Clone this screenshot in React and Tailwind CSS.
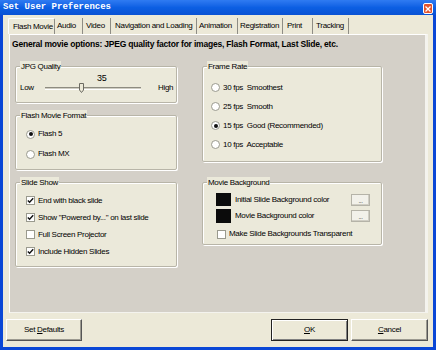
const F = "font-['Liberation_Sans',Arial,sans-serif]";
const T = "text-[8px] tracking-[-0.3px]";

function Group({ label, className, children }) {
  return (
    <div className={"relative border border-[#b8b5a8] rounded-[2px] bg-[#ebe9da] shadow-[inset_1px_1px_0_#ffffff,1px_1px_0_#ffffff] " + className}>
      <span className="absolute left-[4px] top-[-6px] px-[1px] bg-[#ebe9da] text-[8px] tracking-[-0.3px] leading-[11px] whitespace-nowrap">{label}</span>
      {children}
    </div>
  );
}

function Radio({ checked }) {
  return (
    <span className="w-[9px] h-[9px] rounded-full border border-[#9a9a8e] bg-white flex items-center justify-center shrink-0">
      {checked && <span className="w-[4px] h-[4px] rounded-full bg-[#111]" />}
    </span>
  );
}

function Check({ checked }) {
  return (
    <span className="w-[9px] h-[9px] border border-[#9a9a8e] bg-white flex items-center justify-center shrink-0">
      {checked && (
        <svg width="7" height="7" viewBox="0 0 7 7">
          <path d="M0.8 3.4 L2.6 5.2 L6.2 1.2" stroke="#111" strokeWidth="1.4" fill="none" />
        </svg>
      )}
    </span>
  );
}

function Tab({ w, pl, children, selected }) {
  return (
    <div
      className={
        "h-[16px] flex items-center text-[8px] tracking-[-0.3px] leading-none whitespace-nowrap " +
        (selected
          ? "bg-[#ece9d8] border-l border-t border-white border-r border-r-[#8e8d85] rounded-t-[2px]"
          : "border-r border-[#8e8d85]")
      }
      style={{ width: w, paddingLeft: pl }}
    >
      {children}
    </div>
  );
}

function Btn({ children, def, className }) {
  return (
    <div
      className={
        "h-[22px] flex items-center justify-center text-[8px] tracking-[-0.3px] bg-[#ece9d8] " +
        (def
          ? "border border-[#222] shadow-[inset_1px_1px_0_#fff,inset_-1px_-1px_0_#808080]"
          : "border-t border-l border-white border-r border-b border-r-[#555] border-b-[#555] shadow-[inset_-1px_-1px_0_#9c9a90]") +
        " " + className
      }
    >
      <span className="whitespace-pre">{children}</span>
    </div>
  );
}

function Row({ h, children }) {
  return <div className={"flex items-center gap-[3px] whitespace-pre " + h}>{children}</div>;
}

export default function App() {
  return (
    <div className={"w-[436px] h-[350px] bg-[#0a47d6] flex flex-col text-black overflow-hidden " + F}>
      {/* title bar */}
      <div className="h-[15px] flex items-center justify-between pl-[3px] pr-[3px] bg-gradient-to-b from-[#2f7bf2] via-[#0c5fe3] to-[#0a52d4]">
        <span className="font-['Liberation_Mono',monospace] font-bold text-[9px] text-white leading-none">Set User Preferences</span>
        <div className="w-[10px] h-[11px] mt-[2px] rounded-[2px] bg-[#e2542f] border border-white flex items-center justify-center">
          <svg width="6" height="6" viewBox="0 0 6 6">
            <path d="M0.5 0.5 L5.5 5.5 M5.5 0.5 L0.5 5.5" stroke="#fff" strokeWidth="1.3" />
          </svg>
        </div>
      </div>

      {/* body */}
      <div className="flex-1 mx-[3px] mb-[3px] bg-[#ece9d8] flex flex-col">
        {/* tabs */}
        <div className="flex pl-[5px] pt-[3px] h-[19px]">
          <Tab w={47} pl={4} selected>Flash Movie</Tab>
          <Tab w={28} pl={2}>Audio</Tab>
          <Tab w={28} pl={3}>Video</Tab>
          <Tab w={86} pl={4}>Navigation and Loading</Tab>
          <Tab w={41} pl={2}>Animation</Tab>
          <Tab w={45} pl={2}>Registration</Tab>
          <Tab w={30} pl={4}>Print</Tab>
          <Tab w={36} pl={3}>Tracking</Tab>
        </div>

        {/* page */}
        <div className="ml-[6px] w-[419px] h-[279px] bg-[#d4d0c8] border-l border-t border-white border-r-[3px] border-r-[#f4f3ee] border-b border-b-[#f4f3ee] flex flex-col">
          <div className="pl-[2px] pt-[3px] h-[15px] text-[8.5px] tracking-[-0.2px] leading-[12px] font-bold whitespace-nowrap">
            General movie options: JPEG quality factor for images, Flash Format, Last Slide, etc.
          </div>
          <div className={"flex pl-[5px] gap-[25px] mt-[16px] " + T}>
            {/* left column */}
            <div className="w-[162px] flex flex-col gap-[12px]">
              <Group label="JPG Quality" className="h-[37px]">
                <div className="pl-[4px] pt-[6px]">
                  <div className="pl-[77px] leading-[10px] text-[9px]">35</div>
                  <div className="flex items-center h-[10px]">
                    <span className="w-[25px] leading-none">Low</span>
                    <div className="relative w-[96px] h-[3px] border-t border-[#8d8b80] border-b border-b-white bg-[#cfcdc2]">
                      <svg className="absolute left-[34px] top-[-5px]" width="5" height="10" viewBox="0 0 5 10">
                        <path d="M0.5 0.5 H4.5 V7 L2.5 9.5 L0.5 7 Z" fill="#ece9d8" stroke="#6b6a62" strokeWidth="1" />
                      </svg>
                    </div>
                    <span className="ml-[17px] leading-none">High</span>
                  </div>
                </div>
              </Group>

              <Group label="Flash Movie Format" className="h-[55px]">
                <div className="pl-[10px] pt-[13px] flex flex-col gap-[10px]">
                  <Row h="h-[10px]"><Radio checked /><span>Flash 5</span></Row>
                  <Row h="h-[10px]"><Radio /><span>Flash MX</span></Row>
                </div>
              </Group>

              <Group label="Slide Show" className="h-[85px]">
                <div className="pl-[10px] pt-[9px] flex flex-col">
                  <Row h="h-[17px]"><Check checked /><span>End with black slide</span></Row>
                  <Row h="h-[17px]"><Check checked /><span>Show "Powered by..." on last slide</span></Row>
                  <Row h="h-[17px]"><Check /><span>Full Screen Projector</span></Row>
                  <Row h="h-[17px]"><Check checked /><span>Include Hidden Slides</span></Row>
                </div>
              </Group>
            </div>

            {/* right column */}
            <div className="w-[180px] flex flex-col gap-[20px]">
              <Group label="Frame Rate" className="h-[96px]">
                <div className="pl-[8px] pt-[11px] flex flex-col">
                  <Row h="h-[19px]"><Radio /><span>30 fps  Smoothest</span></Row>
                  <Row h="h-[19px]"><Radio /><span>25 fps  Smooth</span></Row>
                  <Row h="h-[19px]"><Radio checked /><span>15 fps  Good (Recommended)</span></Row>
                  <Row h="h-[19px]"><Radio /><span>10 fps  Acceptable</span></Row>
                </div>
              </Group>

              <Group label="Movie Background" className="h-[63px]">
                <div className="pt-[10px] flex flex-col">
                  <div className="flex items-center h-[13px] whitespace-nowrap">
                    <span className="ml-[13px] w-[15px] h-[13px] bg-[#0b0b0b]" />
                    <span className="ml-[4px] w-[116px]">Initial Slide Background color</span>
                    <span className="w-[19px] h-[12px] border border-[#b5b3a8] bg-[#f2f1ea] shadow-[inset_-1px_-1px_0_#d0cec4] flex items-end justify-center text-[6px] leading-[8px]">...</span>
                  </div>
                  <div className="flex items-center h-[14px] mt-[3px] whitespace-nowrap">
                    <span className="ml-[13px] w-[15px] h-[14px] bg-[#0b0b0b]" />
                    <span className="ml-[4px] w-[116px]">Movie Background color</span>
                    <span className="w-[19px] h-[12px] border border-[#b5b3a8] bg-[#f2f1ea] shadow-[inset_-1px_-1px_0_#d0cec4] flex items-end justify-center text-[6px] leading-[8px]">...</span>
                  </div>
                  <div className="flex items-center h-[10px] mt-[6px] pl-[14px] gap-[3px] whitespace-nowrap">
                    <Check /><span>Make Slide Backgrounds Transparent</span>
                  </div>
                </div>
              </Group>
            </div>
          </div>
        </div>

        {/* buttons */}
        <div className="flex mt-[6px] pl-[3px]">
          <Btn className="w-[76px]">Set <span className="underline">D</span>efaults</Btn>
          <Btn def className="w-[77px] ml-[189px]"><span className="underline">O</span>K</Btn>
          <Btn className="w-[77px] ml-[3px]"><span className="underline">C</span>ancel</Btn>
        </div>
      </div>
    </div>
  );
}
